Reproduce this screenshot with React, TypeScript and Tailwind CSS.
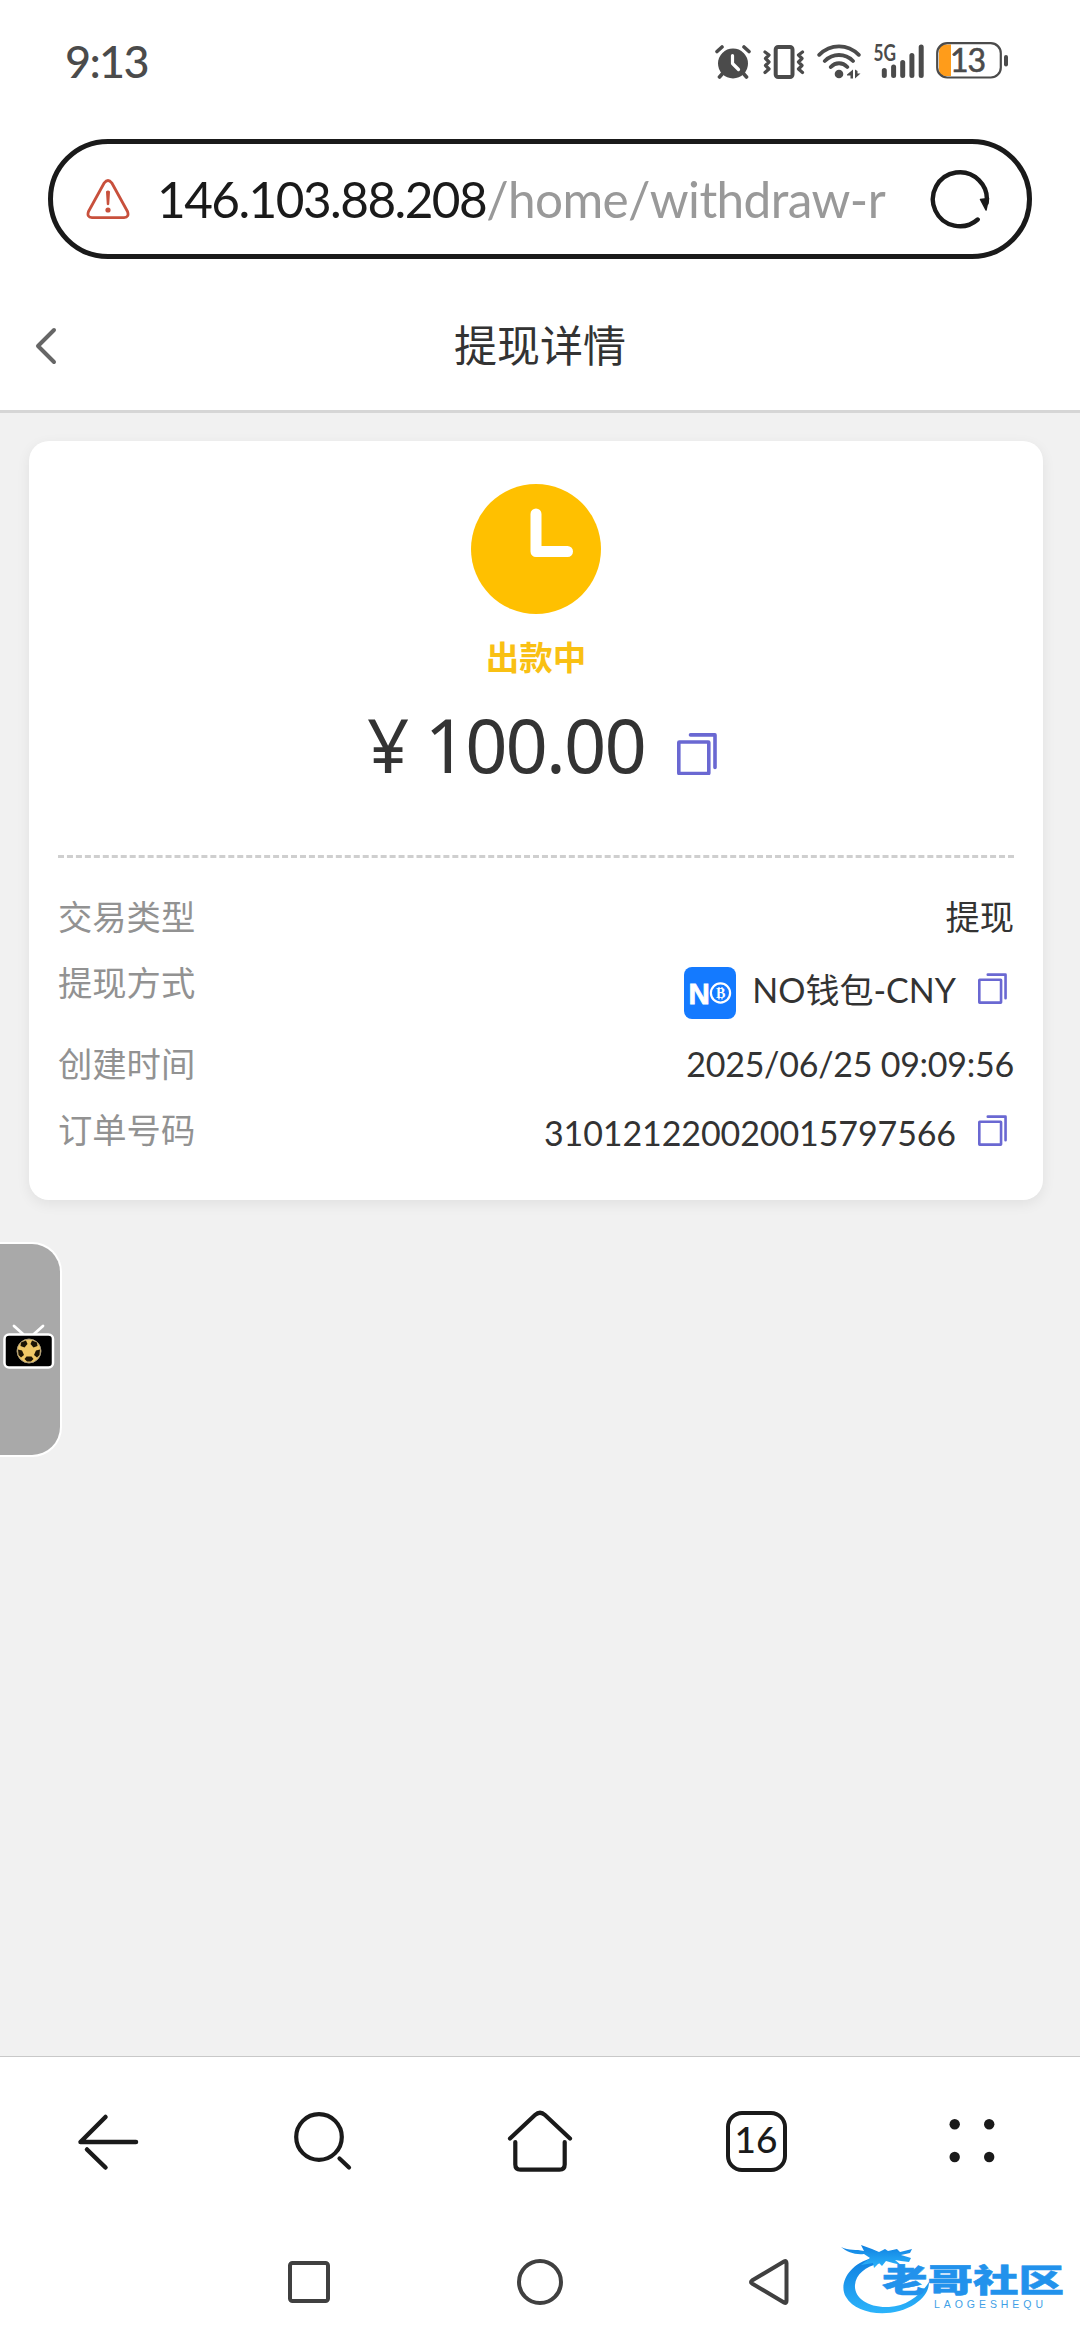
import React from 'react';

interface IconProps {
  className?: string;
}

interface DetailRowProps {
  label: string;
  rowClass: string;
  valueClass: string;
  children: React.ReactNode;
}

const AlarmIcon: React.FC<IconProps> = ({ className }) => (
  <svg className={className} width="36" height="34" viewBox="0 0 36 34" fill="none">
    <circle cx="18" cy="18.5" r="15" fill="#4b4b4b" />
    <path d="M2 6.5L7 2M34 6.5L29 2M4.500 32L8 28M31.500 32L28 28" stroke="#4b4b4b" strokeWidth="3.600" strokeLinecap="round" />
    <path d="M17.500 10.500V18.500L23.500 24.500" stroke="#fff" strokeWidth="3.200" strokeLinecap="round" strokeLinejoin="round" />
  </svg>
);

const VibrateIcon: React.FC<IconProps> = ({ className }) => (
  <svg className={className} width="42" height="34" viewBox="0 0 42 34" fill="none" stroke="#4b4b4b">
    <rect x="12.700" y="2" width="16.800" height="30" rx="2.500" strokeWidth="4" />
    <path d="M2 7L6 10L2.500 13.500L6 17L2.500 20.500L6 24L2 27.500M39.500 7L35.500 10L39 13.500L35.500 17L39 20.500L35.500 24L39.500 27.500" strokeWidth="3.200" strokeLinecap="round" strokeLinejoin="round" />
  </svg>
);

const WifiIcon: React.FC<IconProps> = ({ className }) => (
  <svg className={className} width="44" height="35" viewBox="0 0 44 35" fill="none">
    <path d="M2.200 10.800C13.500 -0.500 30.500 -0.500 41.800 10.800M7.800 17C16 9 28 9 36 17M13.800 23C18.500 18 25.500 18 30.300 23" stroke="#4b4b4b" strokeWidth="3.800" strokeLinecap="round" />
    <circle cx="22" cy="30" r="4.300" fill="#4b4b4b" />
    <path d="M30 30.500L36 25.500V34.500H33.500V31.500H30ZM38 25.500V34.500L43.500 29.500H40.500V27Z" fill="#4b4b4b" />
  </svg>
);

const SignalIcon: React.FC<IconProps> = ({ className }) => (
  <svg className={`overflow-visible ${className}`} width="52" height="40" viewBox="0 -5 52 40">
    <text x="0.5" y="17" fontFamily="Lato" fontSize="22" fontWeight="700" fill="#4b4b4b" textLength="22.500" lengthAdjust="spacingAndGlyphs">5G</text>
    <path d="M11.300 26.500V31.500M20.600 23V31.500M29.700 18.500V31.500M38.900 11.500V31.500M48.200 3V31.500" stroke="#4b4b4b" strokeWidth="5" strokeLinecap="round" />
  </svg>
);

const BatteryIcon: React.FC<IconProps> = ({ className }) => (
  <svg className={`overflow-visible ${className}`} width="73" height="43" viewBox="0 -3 73 43">
    <path d="M9 2.500H15V34H9Q3 34 3 27V9.500Q3 2.500 9 2.500Z" fill="#ff9c1a" />
    <rect x="1.200" y="1.200" width="63.600" height="34.300" rx="10" fill="none" stroke="#4b4b4b" strokeWidth="2.200" />
    <path d="M70 15V22.500" stroke="#4b4b4b" strokeWidth="4" strokeLinecap="round" />
    <text x="14" y="29.800" fontFamily="Lato" fontSize="32" fontWeight="400" stroke="#4b4b4b" strokeWidth="0.600" fill="#4b4b4b" textLength="36">13</text>
  </svg>
);

const WarningIcon: React.FC<IconProps> = ({ className }) => (
  <svg className={className} width="44" height="40" viewBox="0 0 44 40" fill="none">
    <path d="M18.300 3.800Q22 -0.800 25.700 3.800L41.500 32.500Q43.500 38.200 38 38.600H6Q0.500 38.200 2.500 32.500Z" stroke="#c8503c" strokeWidth="2.800" strokeLinejoin="round" />
    <path d="M20 12.500Q22 10.500 24 12.500L23.200 25.500Q22 27 20.800 25.500Z" fill="#c8503c" />
    <circle cx="22" cy="31" r="2.600" fill="#c8503c" />
  </svg>
);

const ReloadIcon: React.FC<IconProps> = ({ className }) => (
  <svg className={className} width="60" height="60" viewBox="0 0 60 60" fill="none">
    <path d="M47.700 50.500A27 27 0 1 1 56.600 34" stroke="#1a1a1a" strokeWidth="4.400" strokeLinecap="round" />
    <path d="M50.500 30.500L58.500 29.500L56 41Z" fill="#1a1a1a" stroke="#1a1a1a" strokeWidth="1.500" strokeLinejoin="round" />
  </svg>
);

const CopyIcon: React.FC<IconProps> = ({ className }) => (
  <svg className={className} viewBox="0 0 40 42" fill="none" stroke="#6a68d2" strokeWidth="3.600" strokeLinecap="round" strokeLinejoin="round">
    <rect x="1.800" y="9" width="30" height="31.500" rx="0.500" />
    <path d="M13.500 1.900H38V34.500" />
  </svg>
);

const NoWalletLogo: React.FC<IconProps> = ({ className }) => (
  <svg className={className} width="52" height="52" viewBox="0 0 52 52">
    <rect width="52" height="52" rx="8" fill="#147aff" />
    <text x="4.500" y="37" fontFamily="Liberation Sans" fontSize="29.500" fontWeight="700" fill="#fff" stroke="#fff" strokeWidth="0.800">N</text>
    <circle cx="36.500" cy="26" r="9.600" fill="none" stroke="#fff" strokeWidth="2.200" />
    <text x="36.700" y="31" textAnchor="middle" fontFamily="Liberation Serif" fontSize="14" fontWeight="700" fill="#fff">B</text>
    <path d="M35 20V22M38 20V22M35 30.500V32.500M38 30.500V32.500" stroke="#fff" strokeWidth="1.200" />
  </svg>
);

const StatusBar: React.FC = () => (
  <div className="flex h-[139px] items-start justify-between pl-[65px] pr-[71px]">
    <span className="mt-[37px] text-[45px] leading-[48px] tracking-[-1.700px] font-medium text-[#4b4b4b]">9:13</span>
    <div className="mt-[42px] flex items-start">
      <AlarmIcon className="mt-[3px]" />
      <VibrateIcon className="ml-[12px] mt-[3px]" />
      <WifiIcon className="ml-[12px] mt-[2px]" />
      <SignalIcon className="ml-[12px] mt-[-3px]" />
      <BatteryIcon className="ml-[11px] mt-[-3px]" />
    </div>
  </div>
);

const AddressBar: React.FC = () => (
  <div className="mx-12 flex h-[120px] items-center rounded-full border-[5px] border-[#1a1a1a] pl-[33px] pr-[37px]">
    <WarningIcon />
    <div className="ml-[27px] flex-1 whitespace-nowrap text-[49.500px] leading-[60px]">
      <span className="tracking-[-1.550px] text-[#1a1a1a]">146.103.88.208</span>
      <span className="tracking-[-0.600px] text-[#999]">/home/withdraw-r</span>
    </div>
    <ReloadIcon />
  </div>
);

const PageHeader: React.FC = () => (
  <header className="flex h-[154px] items-center border-b-[3px] border-[#d6d6d6] px-[34px] pt-[23px]">
    <svg width="24" height="40" viewBox="0 0 24 40" fill="none" stroke="#666" strokeWidth="4" strokeLinecap="round" strokeLinejoin="round">
      <path d="M20 4L4 20L20 36" />
    </svg>
    <h1 className="flex-1 pr-[24px] text-center text-[43px] leading-[60px] text-[#333]">提现详情</h1>
  </header>
);

const DetailRow: React.FC<DetailRowProps> = ({ label, rowClass, valueClass, children }) => (
  <div className={`flex items-start justify-between ${rowClass}`}>
    <span className="text-[34.300px] leading-[66px] text-[#929292]">{label}</span>
    <div className={`flex items-center text-[34px] text-[#333] ${valueClass}`}>{children}</div>
  </div>
);

const WithdrawCard: React.FC = () => (
  <section className="ml-[29px] mr-[37px] h-[759px] rounded-[20px] bg-white px-[29px] pt-[43px] shadow-[0_4px_14px_rgba(0,0,0,0.07)]">
    <div className="flex flex-col items-center">
      <svg width="130" height="130" viewBox="0 0 130 130" fill="none">
        <circle cx="65" cy="65" r="65" fill="#ffc000" />
        <path d="M65 30V67.500H96.500" stroke="#fff" strokeWidth="11" strokeLinecap="round" strokeLinejoin="round" />
      </svg>
      <p className="mt-[20px] text-[33.500px] leading-[46px] font-bold text-[#f9c013]">出款中</p>
      <div className="ml-[12px] mt-[27px] flex h-[115px] items-start">
        <p className="w-[310px] whitespace-nowrap font-['Noto_Sans',sans-serif] text-[74px] leading-[76px] tracking-[-1.900px] text-[#333]">
          ¥ 100.00
        </p>
        <CopyIcon className="mt-[26px] h-[42px] w-[40px]" />
      </div>
    </div>

    <div className="mt-[33px] border-t-[3px] border-dashed border-[#cfcfcf]" />

    <div className="mt-[26px]">
      <DetailRow label="交易类型" rowClass="h-[66px]" valueClass="h-[66px]">
        <span className="text-[34.300px]">提现</span>
      </DetailRow>
      <DetailRow label="提现方式" rowClass="h-[81px]" valueClass="h-[86px]">
        <NoWalletLogo />
        <span className="mb-[7px] ml-[16px] mr-[22px]">NO钱包-CNY</span>
        <CopyIcon className="mr-[7px] mb-[9px] h-[31px] w-[29px]" />
      </DetailRow>
      <DetailRow label="创建时间" rowClass="h-[66px]" valueClass="h-[64px]">
        <span className="tracking-[-0.250px]">2025/06/25 09:09:56</span>
      </DetailRow>
      <DetailRow label="订单号码" rowClass="h-[73px]" valueClass="h-[72px]">
        <span className="mb-[2px] mr-[22px] tracking-[-0.100px]">310121220020015797566</span>
        <CopyIcon className="mr-[7px] mb-[5px] h-[31px] w-[29px]" />
      </DetailRow>
    </div>
  </section>
);

// Half-hidden drawer handle for the live match widget
const LiveTab: React.FC = () => (
  <div className="absolute left-0 top-[1242px] flex h-[215px] w-[62px] items-center rounded-r-[30px] border-y-2 border-r-2 border-white bg-[#a9a9a9] pb-[11px]">
    <svg width="58" height="50" viewBox="0 0 58 50" fill="none">
      <path d="M14 7L23 15M43 7L34 15" stroke="#fff" strokeWidth="2.800" strokeLinecap="round" />
      <rect x="4.500" y="15.500" width="48.500" height="33" rx="4.500" fill="#000" stroke="#fff" strokeWidth="2.500" />
      <circle cx="29" cy="32" r="12" fill="#efc766" stroke="#a89a7c" strokeWidth="1" />
      <g fill="#1c1405">
        <path d="M21 23.500L26 21.500L27.500 25L24.500 28.500L20.500 27Z" />
        <path d="M37 23.500L32 21.500L30.500 25L33.500 28.500L37.500 27Z" />
        <path d="M18 30.500L22 31.500L24 36L21 38.500L18.500 36Z" />
        <path d="M40 30.500L36 31.500L34 36L37 38.500L39.500 36Z" />
        <path d="M26.500 37.500H31.500L33.500 40L31 42.500H27L24.500 40Z" />
      </g>
    </svg>
  </div>
);

const BrowserToolbar: React.FC = () => (
  <div className="flex h-[170px] items-center border-t border-[#c8c8c8] bg-white text-[#1a1a1a]">
    <div className="flex flex-1 justify-center">
      <svg width="64" height="64" viewBox="0 0 64 64" fill="none" stroke="currentColor" strokeWidth="4.500" strokeLinecap="round" strokeLinejoin="round">
        <path d="M60 32H4.500L29.500 7" />
        <path d="M11 39.500L29.500 57.500" />
      </svg>
    </div>
    <div className="flex flex-1 justify-center">
      <svg width="64" height="64" viewBox="0 0 64 64" fill="none" stroke="currentColor" strokeWidth="4.200" strokeLinecap="round">
        <circle cx="27" cy="27" r="22.800" />
        <path d="M47.500 48.500L57 57.500" />
      </svg>
    </div>
    <div className="flex flex-1 justify-center">
      <svg width="66" height="64" viewBox="0 0 66 64" fill="none" stroke="currentColor" strokeWidth="4.200" strokeLinecap="round">
        <path d="M3 28.500L28 5Q33 0.500 38 5L63 28.500" />
        <path d="M8.300 32V54.500Q8.300 59.700 13.500 59.700H52.500Q57.700 59.700 57.700 54.500V32" />
      </svg>
    </div>
    <div className="flex flex-1 justify-center">
      <span className="flex h-[61px] w-[61px] items-center justify-center rounded-[16px] border-[4px] border-[#1a1a1a] pb-[6px] text-[37px] leading-none font-medium">
        16
      </span>
    </div>
    <div className="flex flex-1 justify-center">
      <svg width="46" height="46" viewBox="0 0 46 46" fill="currentColor">
        <circle cx="5.700" cy="5.200" r="5.200" />
        <circle cx="40.200" cy="5.200" r="5.200" />
        <circle cx="5.700" cy="38" r="5.200" />
        <circle cx="40.200" cy="38" r="5.200" />
      </svg>
    </div>
  </div>
);

const SystemNav: React.FC = () => (
  <div className="flex h-[114px] items-center justify-center bg-white pb-[2px] text-[#404040]">
    <svg width="42" height="42" viewBox="0 0 42 42" fill="none" stroke="currentColor" strokeWidth="4">
      <rect x="2" y="2" width="38" height="38" rx="2.500" />
    </svg>
    <svg className="ml-[187px]" width="46" height="46" viewBox="0 0 46 46" fill="none" stroke="currentColor" strokeWidth="4">
      <circle cx="23" cy="23" r="21" />
    </svg>
    <svg className="ml-[186px] mr-[3px]" width="40" height="48" viewBox="0 0 40 48" fill="none" stroke="currentColor" strokeWidth="4" strokeLinejoin="round">
      <path d="M3 22.500L35 3.500Q37.500 2 37.500 5V43Q37.500 46 35 44.500L3 25.500Q1 24 3 22.500Z" />
    </svg>
  </div>
);

const CommunityLogo: React.FC = () => (
  <svg className="absolute bottom-[18px] right-[13px]" width="226" height="80" viewBox="0 0 226 80">
    <defs>
      <linearGradient id="logoBlue" x1="0" y1="0" x2="0" y2="1">
        <stop offset="0" stopColor="#0f7fe0" />
        <stop offset="1" stopColor="#2cb4fb" />
      </linearGradient>
    </defs>
    <g fill="url(#logoBlue)">
      <path d="M31 16C8 22 -3 42 5 55C15 73 51 77 74 62C84 55 88 48 88 40C80 53 66 64 48 65C27 66 13 56 14 43C15 32 24 25 39 21Z" />
      <path d="M0 5C8 9 15 7 23 9L20 3L31 7L38 10L44 7L47 9L56 7L59 10L71 7L69 11L60 13L70 16L68 20L60 19L54 18L60 23L52 21L45 19L41 24L38 21L33 26L32 21L20 23L29 16L23 12C14 13 6 10 0 5Z" />
    </g>
    <text x="41" y="50" fontFamily="Noto Sans CJK SC" fontSize="31.500" fontWeight="900" fill="#2292ec" stroke="#2292ec" strokeWidth="0.500" textLength="182" lengthAdjust="spacingAndGlyphs">老哥社区</text>
    <text x="93" y="65.500" fontFamily="Liberation Sans" fontSize="10.500" fill="#3f9fe6" textLength="109">LAOGESHEQU</text>
  </svg>
);

const App: React.FC = () => {
  return (
    <div className="relative flex h-[2340px] w-[1080px] flex-col overflow-hidden bg-white font-['Lato','Noto_Sans_CJK_SC',sans-serif]">
      <StatusBar />
      <AddressBar />
      <PageHeader />
      <main className="flex-1 bg-[#f1f1f1] pt-[28px]">
        <WithdrawCard />
      </main>
      <BrowserToolbar />
      <SystemNav />
      <LiveTab />
      <CommunityLogo />
    </div>
  );
};

export default App;
